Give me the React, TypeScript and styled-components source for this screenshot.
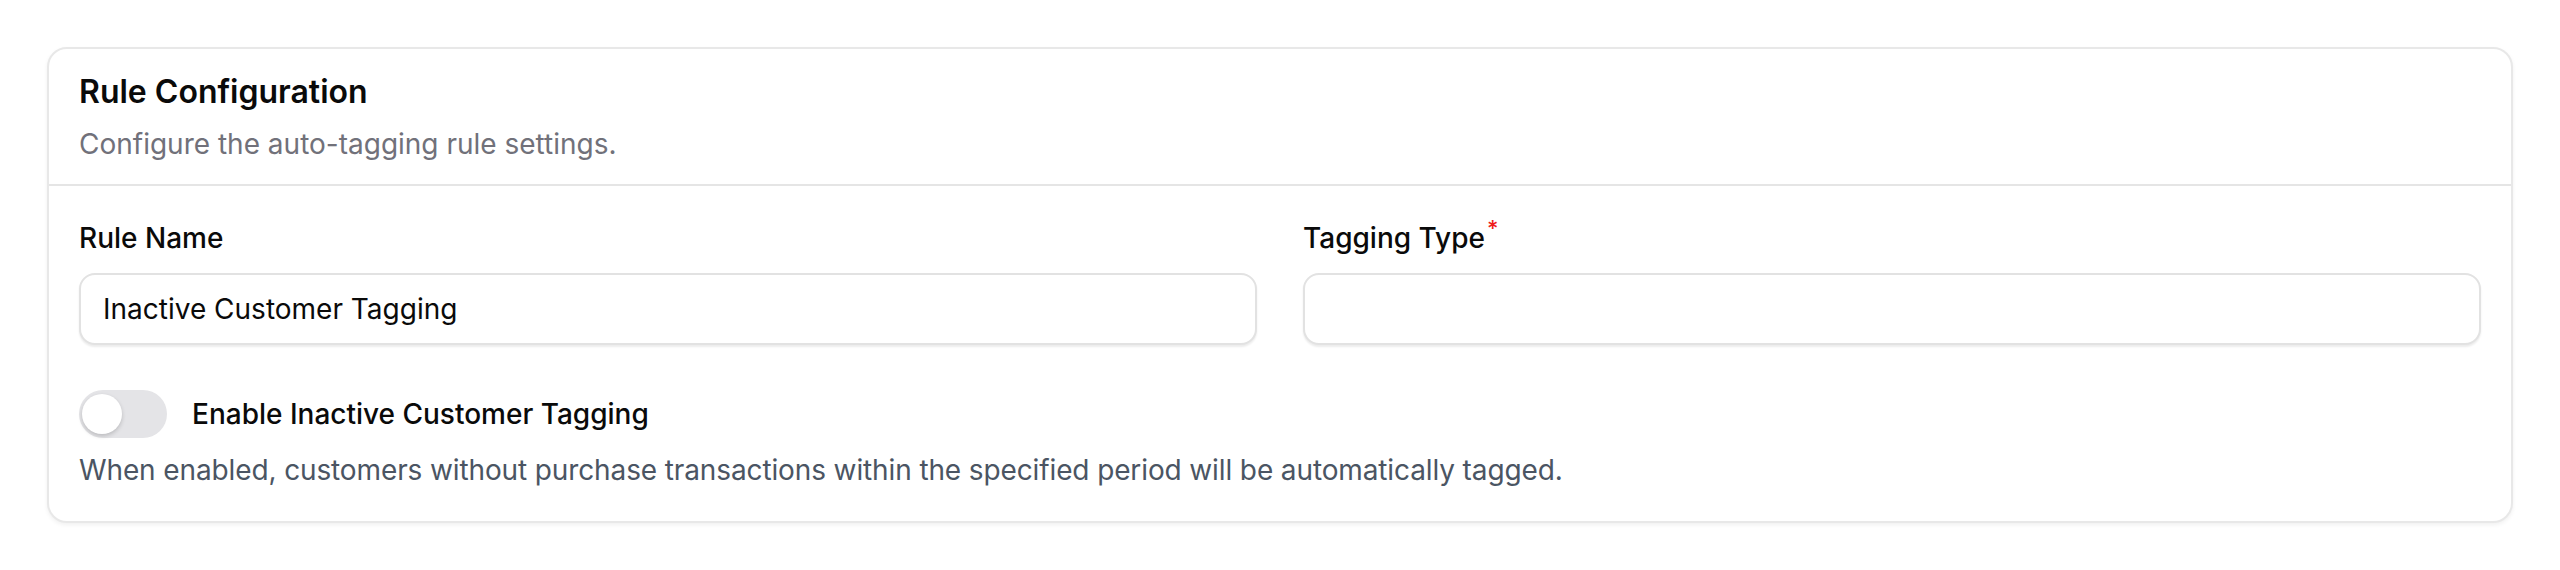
import React from "react";
import styled, { createGlobalStyle } from "styled-components";

const Global = createGlobalStyle`
  html, body { margin: 0; padding: 0; background: #ffffff; }
  body { font-family: Inter, "Noto Sans", sans-serif; color: #0a0a0a; }
  * { box-sizing: border-box; }
`;

const Page = styled.div`
  padding: 47px 47px;
`;

const Card = styled.section`
  border: 2px solid #e8e8e8;
  border-radius: 20px;
  background: #ffffff;
  box-shadow: 0 2px 4px rgba(0, 0, 0, 0.06);
`;

const Header = styled.header`
  padding: 25px 30px 20px;
  border-bottom: 2px solid #e5e5e5;
`;

const Title = styled.h2`
  margin: 0 0 14px;
  font-size: 32px;
  line-height: 36px;
  font-weight: 600;
  color: #0a0a0a;
`;

const Subtitle = styled.p`
  margin: 0;
  font-size: 28px;
  line-height: 40px;
  color: #71717a;
`;

const Body = styled.div`
  padding: 32px 30px 31px;
`;

const FieldGrid = styled.div`
  display: grid;
  grid-template-columns: 1fr 1fr;
  column-gap: 46px;
`;

const Field = styled.div`
  display: flex;
  flex-direction: column;
  gap: 15px;
`;

const Label = styled.label`
  font-size: 28px;
  line-height: 40px;
  font-weight: 500;
  color: #0a0a0a;
`;

const Required = styled.sup`
  color: #ef1c1c;
  font-size: 22px;
  line-height: 0;
  margin-left: 2px;
  vertical-align: 12px;
`;

const Input = styled.input`
  height: 72px;
  width: 100%;
  border: 2px solid #e2e2e2;
  border-radius: 16px;
  padding: 0 22px;
  font-family: inherit;
  font-size: 28px;
  color: #0a0a0a;
  background: #ffffff;
  box-shadow: 0 2px 2px rgba(0, 0, 0, 0.08);
  outline: none;
`;

const ToggleRow = styled.div`
  display: flex;
  align-items: center;
  gap: 25px;
  margin-top: 45px;
`;

const Track = styled.button<{ $on: boolean }>`
  position: relative;
  width: 88px;
  height: 48px;
  border: none;
  border-radius: 24px;
  padding: 0;
  background: ${(p) => (p.$on ? "#18181b" : "#e4e4e7")};
  cursor: pointer;
  flex-shrink: 0;
`;

const Knob = styled.span<{ $on: boolean }>`
  position: absolute;
  top: 4px;
  left: ${(p) => (p.$on ? "44px" : "3px")};
  width: 40px;
  height: 40px;
  border-radius: 50%;
  background: #ffffff;
  box-shadow: 0 2px 4px rgba(0, 0, 0, 0.18);
`;

const ToggleLabel = styled.span`
  font-size: 28px;
  line-height: 40px;
  font-weight: 500;
  color: #0a0a0a;
`;

const Help = styled.p`
  margin: 12px 0 0;
  font-size: 28px;
  line-height: 40px;
  letter-spacing: -0.12px;
  color: #4b5563;
`;

export default function App() {
  const [on, setOn] = React.useState(false);
  return (
    <>
      <Global />
      <Page>
        <Card>
          <Header>
            <Title>Rule Configuration</Title>
            <Subtitle>Configure the auto-tagging rule settings.</Subtitle>
          </Header>
          <Body>
            <FieldGrid>
              <Field>
                <Label>Rule Name</Label>
                <Input defaultValue="Inactive Customer Tagging" />
              </Field>
              <Field>
                <Label>
                  Tagging Type<Required>*</Required>
                </Label>
                <Input defaultValue="" />
              </Field>
            </FieldGrid>
            <ToggleRow>
              <Track $on={on} onClick={() => setOn(!on)} aria-label="toggle">
                <Knob $on={on} />
              </Track>
              <ToggleLabel>Enable Inactive Customer Tagging</ToggleLabel>
            </ToggleRow>
            <Help>
              When enabled, customers without purchase transactions within the specified period will be automatically tagged.
            </Help>
          </Body>
        </Card>
      </Page>
    </>
  );
}
